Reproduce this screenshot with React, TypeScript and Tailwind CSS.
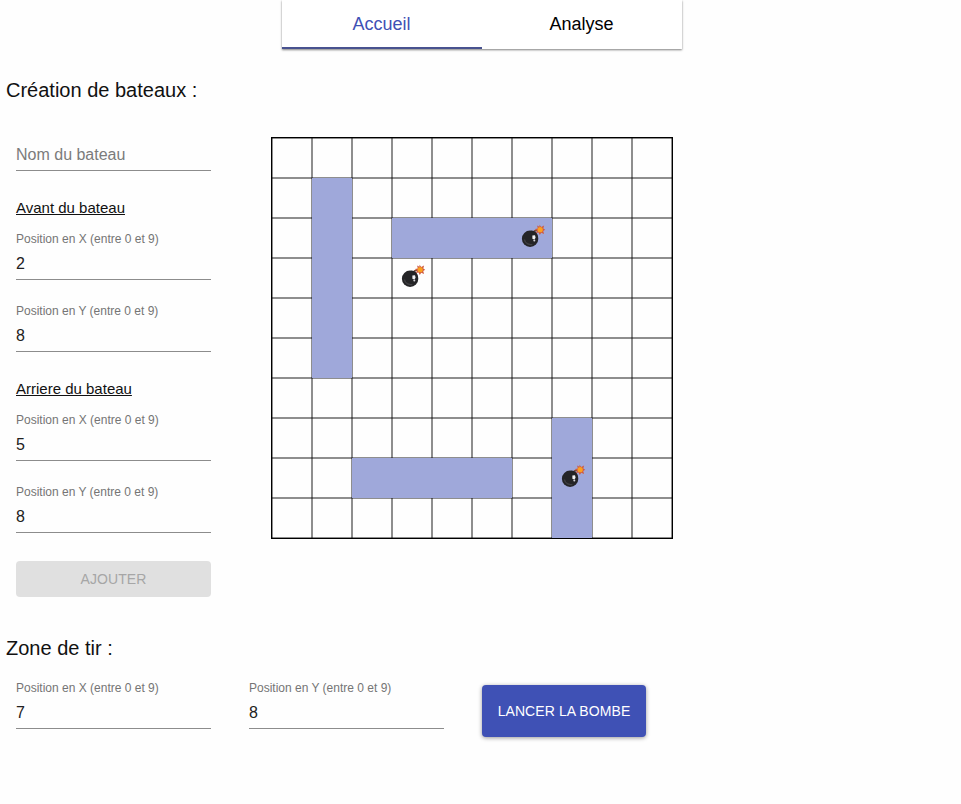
const LINES = [0, 1, 2, 3, 4, 5, 6, 7, 8, 9, 10];

const SHIPS = [
  { x: 1, y: 1, w: 1, h: 5 },
  { x: 3, y: 2, w: 4, h: 1 },
  { x: 2, y: 8, w: 4, h: 1 },
  { x: 7, y: 7, w: 1, h: 3 },
];

const BOMBS = [
  { x: 6, y: 2 },
  { x: 3, y: 3 },
  { x: 7, y: 8 },
];

function Bomb({ x, y }: { x: number; y: number }) {
  return (
    <g transform={`translate(${x * 40} ${y * 40})`}>
      <path d="M21 15C21.5 12.8 23.5 11.8 26 12.5" fill="none" stroke="#7b4a3c" strokeWidth="1.6" />
      <path d="M19.4 12.6l4.6 1.2 1.8 3.4-1.7 2.2-5.6-4z" fill="#2c2a2b" />
      <circle cx="18.1" cy="20.8" r="8.2" fill="#242426" />
      <path d="M12.4 21.5a6.2 6.2 0 0 0 8 4.8" fill="none" stroke="#3f3f42" strokeWidth="1.4" />
      <path d="M20.4 17.6l2.6-.4.6 2.6-1.2 1.6-2-.6z" fill="#f1f1f4" />
      <circle cx="22.3" cy="22.6" r="1" fill="#d4d4d9" />
      <path
        d="M27.6 6.8l1.6 2.3 2.9-1.6-.8 3 1.9 1.2-2 1.2.9 3-2.9-1.1-1.4 2.3-1.2-2.5-3 .4 1.5-2.3-2.2-1.8 2.9-.5-.7-2.8 2.3 1.2z"
        fill="#cf5a41"
      />
      <circle cx="28.2" cy="11.7" r="2.6" fill="#f9a01f" />
    </g>
  );
}

function Board() {
  return (
    <div className="h-[402px] w-[402px] border border-black">
      <svg width="400" height="400" viewBox="0 0 400 400" className="block">
        {LINES.map((n) => (
          <path key={n} d={`M${n * 40} 0V400M0 ${n * 40}H400`} stroke="#000" strokeOpacity="0.88" strokeWidth="1" fill="none" />
        ))}
        {SHIPS.map((s, i) => (
          <rect key={i} x={s.x * 40} y={s.y * 40} width={s.w * 40} height={s.h * 40} fill="#9fa8da" />
        ))}
        {BOMBS.map((b, i) => (
          <Bomb key={i} x={b.x} y={b.y} />
        ))}
      </svg>
    </div>
  );
}

function Field({ label, value }: { label: string; value: string }) {
  return (
    <div className="flex h-12 w-[195px] flex-col border-b border-[#8c8c8c]">
      <span className="h-[15px] text-[12px] leading-[15px] text-[#757575]">{label}</span>
      <span className="mt-[7px] text-base leading-[19px] text-[#212121]">{value}</span>
    </div>
  );
}

export default function App() {
  return (
    <div className="flex h-[804px] w-[961px] flex-col bg-[#fefefe] font-['Liberation_Sans',Arial,sans-serif] text-[#111]">
      <header className="ml-[282px] flex h-[49px] w-[400px] bg-white text-lg leading-[48px] shadow-[0px_1px_2px_0px_rgba(0,0,0,0.5)]">
        <div className="w-[200px] border-b-2 border-[#48528f] pr-px text-center text-[#3f51b5]">Accueil</div>
        <div className="w-[200px] pr-px text-center text-black">Analyse</div>
      </header>

      <h2 className="mt-[25px] ml-[6px] h-8 text-xl leading-8">Création de bateaux :</h2>

      <main className="mt-[31px] ml-4 flex h-[460px] gap-[60px]">
        <section className="flex w-[195px] flex-col">
          <div className="h-[34px] border-b border-[#8c8c8c] pt-[8px] text-base leading-[20px] text-[#7b7b7b]">
            Nom du bateau
          </div>
          <h3 className="mt-[27px] h-[20px] text-[15px] leading-[20px] underline">Avant du bateau</h3>
          <div className="mt-[14px] flex flex-col gap-6">
            <Field label="Position en X (entre 0 et 9)" value="2" />
            <Field label="Position en Y (entre 0 et 9)" value="8" />
          </div>
          <h3 className="mt-[27px] h-[20px] text-[15px] leading-[20px] underline">Arriere du bateau</h3>
          <div className="mt-[14px] flex flex-col gap-6">
            <Field label="Position en X (entre 0 et 9)" value="5" />
            <Field label="Position en Y (entre 0 et 9)" value="8" />
          </div>
          <button className="mt-7 h-9 shrink-0 rounded bg-[#e0e0e0] text-sm tracking-[0.08px] text-[#a6a6a6]">
            AJOUTER
          </button>
        </section>
        <Board />
      </main>

      <h2 className="mt-[35px] ml-[6px] h-8 text-xl leading-8">Zone de tir :</h2>

      <div className="mt-[17px] ml-4 flex gap-[38px]">
        <Field label="Position en X (entre 0 et 9)" value="7" />
        <Field label="Position en Y (entre 0 et 9)" value="8" />
        <button className="mt-1 h-[52px] w-[164px] rounded bg-[#3f51b5] text-sm tracking-[0.08px] text-white shadow-[0px_1px_4px_0px_rgba(0,0,0,0.4)]">
          LANCER LA BOMBE
        </button>
      </div>
    </div>
  );
}
